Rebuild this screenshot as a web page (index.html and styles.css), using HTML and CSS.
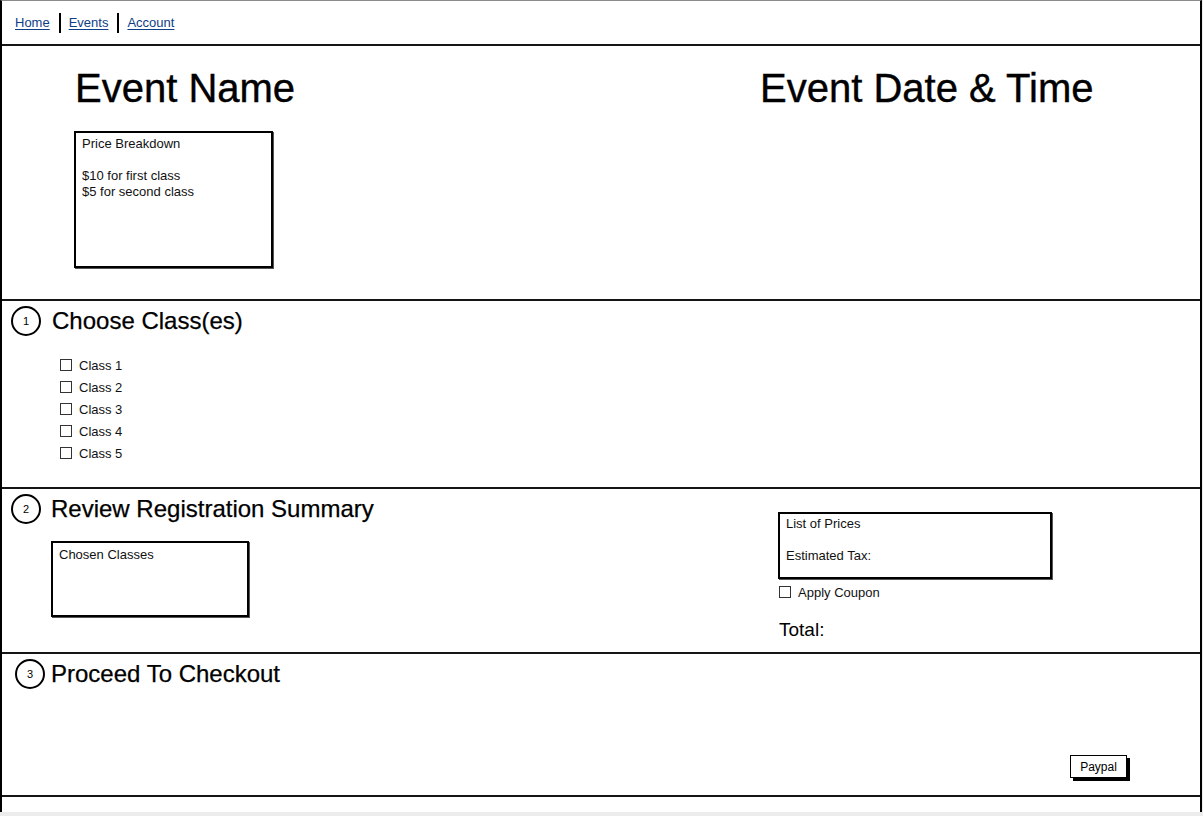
FILE: index.html
```html
<!DOCTYPE html>
<html>
<head>
<meta charset="utf-8">
<title>Event Registration</title>
<link rel="stylesheet" href="styles.css">
</head>
<body>
<div class="frame">
  <nav class="nav">
    <a href="#" class="nav-link">Home</a>
    <span class="nav-sep"></span>
    <a href="#" class="nav-link">Events</a>
    <span class="nav-sep"></span>
    <a href="#" class="nav-link">Account</a>
  </nav>

  <section class="header">
    <div class="header-left">
      <h1 class="big-title">Event Name</h1>
      <div class="box price-box">
        <div>Price Breakdown</div>
        <div>&nbsp;</div>
        <div>$10 for first class</div>
        <div>$5 for second class</div>
      </div>
    </div>
    <div class="header-right">
      <h1 class="big-title">Event Date &amp; Time</h1>
    </div>
  </section>

  <section class="step step1">
    <div class="step-head">
      <span class="circle">1</span>
      <h2 class="step-title">Choose Class(es)</h2>
    </div>
    <ul class="checklist">
      <li class="check-row"><span class="checkbox"></span>Class 1</li>
      <li class="check-row"><span class="checkbox"></span>Class 2</li>
      <li class="check-row"><span class="checkbox"></span>Class 3</li>
      <li class="check-row"><span class="checkbox"></span>Class 4</li>
      <li class="check-row"><span class="checkbox"></span>Class 5</li>
    </ul>
  </section>

  <section class="step step2">
    <div class="step2-left">
      <div class="step-head">
        <span class="circle">2</span>
        <h2 class="step-title">Review Registration Summary</h2>
      </div>
      <div class="box chosen-box">Chosen Classes</div>
    </div>
    <div class="step2-right">
      <div class="box prices-box">
        <div>List of Prices</div>
        <div>&nbsp;</div>
        <div>Estimated Tax:</div>
      </div>
      <div class="check-row coupon"><span class="checkbox"></span>Apply Coupon</div>
      <div class="total">Total:</div>
    </div>
  </section>

  <section class="step step3">
    <div class="step-head head3">
      <span class="circle">3</span>
      <h2 class="step-title">Proceed To Checkout</h2>
    </div>
    <div class="pay-row">
      <button class="paypal">Paypal</button>
    </div>
  </section>
</div>
</body>
</html>
```

FILE: styles.css
```css
html, body {
  margin: 0;
  padding: 0;
}
body {
  background: #ececec;
  font-family: "Liberation Sans", Arial, sans-serif;
  color: #111;
  width: 1203px;
  height: 816px;
  overflow: hidden;
}
.frame {
  width: 1202px;
  height: 812px;
  box-sizing: border-box;
  background: #fff;
  border-left: 2px solid #000;
  border-right: 2px solid #000;
  border-top: 1px solid #8a8a8a;
}
.nav {
  height: 43px;
  border-bottom: 2px solid #151515;
  display: flex;
  align-items: center;
  padding-left: 13px;
  font-size: 13px;
}
.nav-link {
  color: #0f3d86;
  text-decoration: underline;
  text-underline-offset: 2px;
}
.nav-sep {
  width: 2px;
  height: 20px;
  background: #000;
  margin: 0 8px 0 9px;
}
.header {
  height: 255px;
  border-bottom: 2px solid #151515;
  display: flex;
  box-sizing: border-box;
  padding: 18px 0 0 73px;
}
.header-left {
  width: 685px;
}
.big-title {
  margin: 0;
  font-size: 40px;
  line-height: 48px;
  font-weight: normal;
  color: #000;
  -webkit-text-stroke: 0.4px #000;
}
.box {
  border: 2px solid #000;
  box-sizing: border-box;
  font-size: 13px;
  line-height: 16px;
  background: #fff;
  box-shadow: 1px 1px 0 #555;
}
.price-box {
  width: 199px;
  height: 137px;
  margin: 19px 0 0 -1px;
  padding: 3px 6px 2px;
}
.step {
  border-bottom: 2px solid #151515;
  box-sizing: border-box;
}
.step-head {
  display: flex;
  align-items: center;
  gap: 11px;
}
.circle {
  width: 30px;
  height: 30px;
  box-sizing: border-box;
  border: 2px solid #000;
  border-radius: 50%;
  display: flex;
  align-items: center;
  justify-content: center;
  font-size: 11px;
  color: #000;
}
.step-title {
  margin: 0;
  font-size: 24px;
  line-height: 30px;
  font-weight: normal;
  color: #000;
  -webkit-text-stroke: 0.25px #000;
}
.step1 {
  height: 188px;
  padding: 5px 0 0 9px;
}
.checklist {
  list-style: none;
  margin: 18px 0 0 49px;
  padding: 0;
}
.check-row {
  display: flex;
  align-items: center;
  height: 22px;
  font-size: 13px;
}
.checkbox {
  width: 12px;
  height: 12px;
  box-sizing: border-box;
  border: 1px solid #333;
  background: #fff;
  margin-right: 7px;
  flex-shrink: 0;
}
.step2 {
  height: 165px;
  padding: 5px 0 0 9px;
  display: flex;
  align-items: flex-start;
}
.step2 .step-head {
  gap: 10px;
}
.step2-left {
  width: 767px;
}
.chosen-box {
  width: 198px;
  height: 76px;
  margin: 17px 0 0 40px;
  padding: 4px 6px;
}
.step2-right {
  margin-top: 18px;
}
.prices-box {
  width: 274px;
  height: 67px;
  padding: 2px 6px;
}
.coupon {
  height: 16px;
  margin: 5px 0 0 1px;
}
.total {
  margin: 19px 0 0 1px;
  font-size: 19px;
  line-height: 22px;
  color: #000;
}
.step3 {
  height: 143px;
  padding: 5px 0 0 13px;
}
.head3 {
  gap: 6px;
}
.pay-row {
  display: flex;
  justify-content: flex-end;
  margin: 66px 73px 0 0;
}
.paypal {
  width: 57px;
  height: 23px;
  box-sizing: border-box;
  border: 1.5px solid #000;
  background: #fff;
  box-shadow: 3px 3px 0 #000;
  font-family: "Liberation Sans", Arial, sans-serif;
  font-size: 12px;
  color: #000;
  padding: 0;
}
```
